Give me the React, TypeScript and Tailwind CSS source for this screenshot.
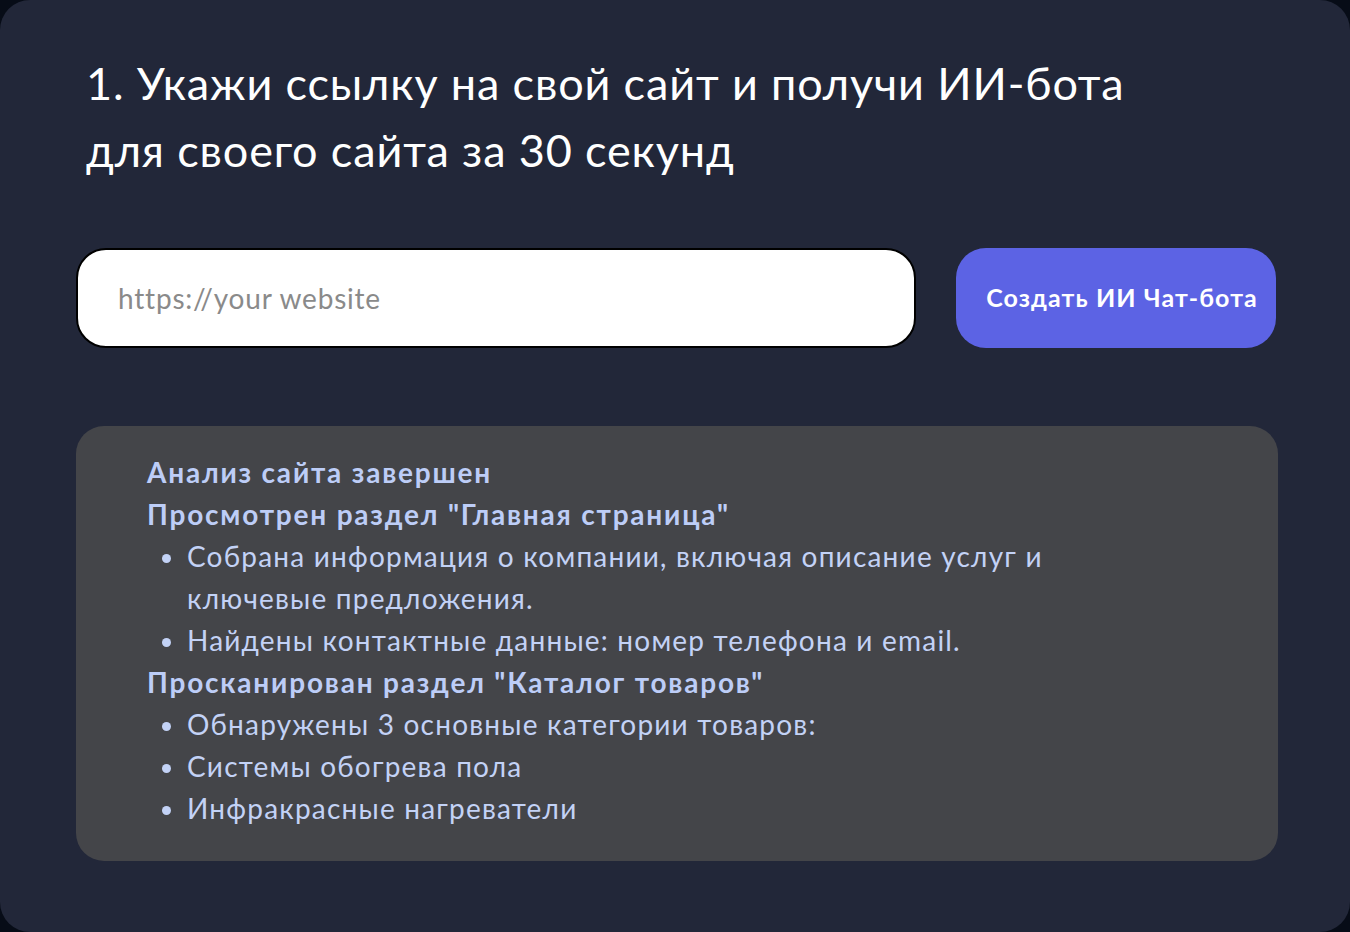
import React from "react";

const font = { fontFamily: "Lato, 'Open Sans', 'Noto Sans', sans-serif" };

export default function App() {
  return (
    <div className="w-[1350px] h-[932px] bg-[#070c17]" style={font}>
      <div className="w-full h-full bg-[#222739] rounded-[30px] pl-[76px] pr-[72px] pt-[50px]">
        <h1 className="ml-[10px] text-[45px] leading-[67px] text-white font-normal tracking-[0.85px]">
          1. Укажи ссылку на свой сайт и получи ИИ-бота
          <br />
          для своего сайта за 30 секунд
        </h1>
        <div className="mt-[64px] flex items-center gap-[40px]">
          <div className="shrink-0 w-[840px] h-[100px] bg-white border-2 border-black rounded-[30px] flex items-center pl-[40px]">
            <span className="text-[28px] text-[#8a8a8a] tracking-[0.8px]">https://your website</span>
          </div>
          <button className="shrink-0 w-[320px] h-[100px] bg-[#5c63e4] rounded-[30px] pl-[12px] text-white text-[25px] font-bold tracking-[1.1px]">
            Создать ИИ Чат-бота
          </button>
        </div>
        <div className="mt-[78px] w-[1202px] h-[435px] bg-[#444549] rounded-[28px] pl-[71px] pt-[25px] text-[28px] leading-[42px] text-[#c3d2f6] tracking-[1.2px] font-normal">
          <div className="font-bold text-[#bdcdf7] tracking-[1.8px]">Анализ сайта завершен</div>
          <div className="font-bold text-[#bdcdf7] tracking-[1.8px]">Просмотрен раздел "Главная страница"</div>
          <ul className="pl-[40px] list-disc">
            <li>
              Собрана информация о компании, включая описание услуг и
              <br />
              ключевые предложения.
            </li>
            <li>Найдены контактные данные: номер телефона и email.</li>
          </ul>
          <div className="font-bold text-[#bdcdf7] tracking-[1.8px]">Просканирован раздел "Каталог товаров"</div>
          <ul className="pl-[40px] list-disc">
            <li>Обнаружены 3 основные категории товаров:</li>
            <li>Системы обогрева пола</li>
            <li>Инфракрасные нагреватели</li>
          </ul>
        </div>
      </div>
    </div>
  );
}
